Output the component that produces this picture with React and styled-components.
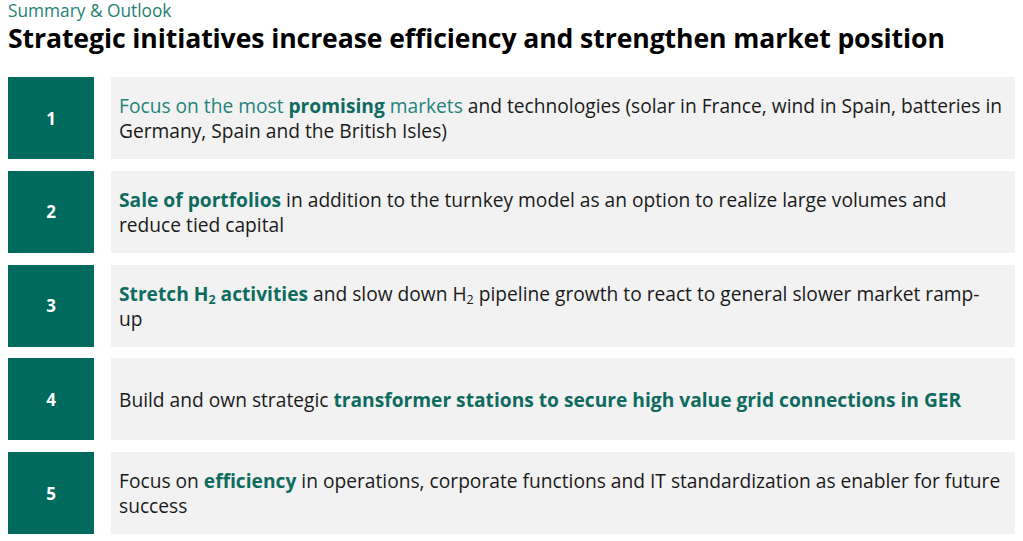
import React from "react";
import styled, { createGlobalStyle } from "styled-components";

const GlobalStyle = createGlobalStyle`
  html, body {
    margin: 0;
    padding: 0;
    background: #ffffff;
  }
  body {
    font-family: "Open Sans", "Noto Sans", sans-serif;
  }
`;

const Page = styled.div`
  width: 1023px;
  height: 541px;
  padding: 0 8px;
  box-sizing: border-box;
  overflow: hidden;
`;

const Kicker = styled.div`
  color: #1f7f74;
  font-size: 17.3px;
  line-height: 22px;
`;

const Title = styled.h1`
  margin: 0;
  font-size: 26.6px;
  line-height: 33px;
  font-weight: 700;
  color: #000;
  letter-spacing: -0.1px;
`;

const List = styled.div`
  margin-top: 22px;
  display: flex;
  flex-direction: column;
  gap: 11.75px;
`;

const Row = styled.div`
  display: grid;
  grid-template-columns: 86px 1fr;
  gap: 17px;
  height: 82px;
`;

const Num = styled.div`
  background: #006a5e;
  color: #fff;
  font-weight: 700;
  font-size: 17px;
  display: flex;
  align-items: center;
  justify-content: center;
`;

const Text = styled.div`
  background: #f2f2f2;
  display: flex;
  align-items: center;
  padding: 0 2px 0 8px;
  font-size: 19.2px;
  line-height: 25px;
  color: #1a1a1a;
  white-space: nowrap;
  overflow: hidden;
`;

const Accent = styled.span`
  color: ${(p) => (p.$light ? "#22847a" : "#0e6b5f")};
  font-weight: ${(p) => (p.$light ? 400 : 700)};
`;

const Sub = styled.sub`
  font-size: 0.65em;
  line-height: 0;
  vertical-align: -0.25em;
`;

const items = [
  <>
    <Accent $light>Focus on the most </Accent>
    <Accent>promising</Accent>
    <Accent $light> markets</Accent> and technologies (solar in France, wind in
    Spain, batteries in
    <br />
    Germany, Spain and the British Isles)
  </>,
  <>
    <Accent>Sale of portfolios</Accent> in addition to the turnkey model as an
    option to realize large volumes and
    <br />
    reduce tied capital
  </>,
  <>
    <Accent>
      Stretch H<Sub>2</Sub> activities
    </Accent>{" "}
    and slow down H<Sub>2</Sub> pipeline growth to react to general slower
    market ramp-
    <br />
    up
  </>,
  <>
    Build and own strategic{" "}
    <Accent>transformer stations to secure high value grid connections in GER</Accent>
  </>,
  <>
    Focus on <Accent>efficiency</Accent> in operations, corporate functions and
    IT standardization as enabler for future
    <br />
    success
  </>,
];

const App = () => {
  return (
    <>
      <GlobalStyle />
      <Page>
        <Kicker>Summary &amp; Outlook</Kicker>
        <Title>Strategic initiatives increase efficiency and strengthen market position</Title>
        <List>
          {items.map((content, i) => (
            <Row key={i}>
              <Num>{i + 1}</Num>
              <Text>
                <div>{content}</div>
              </Text>
            </Row>
          ))}
        </List>
      </Page>
    </>
  );
};

export default App;
